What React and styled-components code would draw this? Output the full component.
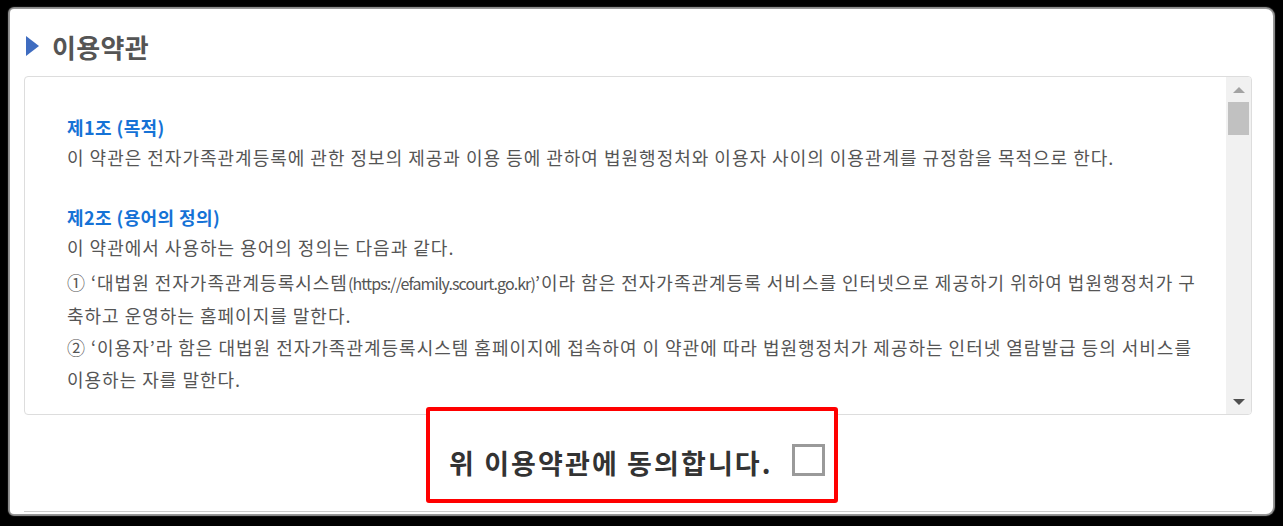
import React from 'react';
import styled, { createGlobalStyle } from 'styled-components';

const GlobalStyle = createGlobalStyle`
	html, body {
		margin: 0;
		padding: 0;
		background: #000;
	}
	body {
		font-family: 'Noto Sans CJK KR', 'Noto Sans', sans-serif;
	}
`;

const StyledPage = styled.div`
	width: 1283px;
	height: 526px;
	padding: 9px 10px 0;
	box-sizing: border-box;
`;

const StyledCard = styled.section`
	height: 505px;
	background: #fff;
	border-radius: 4px 7px 7px 4px;
	box-shadow: 0 0 1px 2px rgba(190, 190, 190, 0.8);
	padding: 23px 21px 0 14px;
	box-sizing: border-box;
	display: flex;
	flex-direction: column;
`;

const StyledTitle = styled.h2`
	display: flex;
	align-items: center;
	gap: 13px;
	margin: 0 0 16px 2px;
	height: 28px;
	font-size: 26px;
	font-weight: 700;
	color: #555;
	letter-spacing: 0.3px;

	&::before {
		content: '';
		width: 0;
		height: 0;
		border-top: 10px solid transparent;
		border-bottom: 10px solid transparent;
		border-left: 13px solid #3f6cc0;
	}
`;

const StyledTermsBox = styled.div`
	display: flex;
	height: 337px;
	border: 1px solid #ddd;
	border-radius: 4px;
	overflow: hidden;
`;

const StyledTermsContent = styled.div`
	flex: 1;
	overflow: hidden;
	padding: 35px 24px 0 42px;
	font-size: 18px;
	line-height: 30px;
	letter-spacing: 1px;
	color: #555;
	word-break: break-all;
`;

const StyledArticle = styled.div`
	margin-bottom: 30px;
`;

const StyledArticleTitle = styled.h3`
	margin: 0;
	font-size: 18px;
	font-weight: 700;
	color: #1572d6;
	letter-spacing: 0.4px;
`;

const StyledText = styled.p`
	margin: 0;
	line-height: ${({ item }) => (item ? '32px' : '30px')};
	margin-top: ${({ first }) => (first ? '4px' : '0')};
`;

const StyledUrl = styled.span`
	font-size: 16px;
	letter-spacing: -0.9px;
`;

const StyledScrollbar = styled.div`
	width: 25px;
	background: #f1f1f1;
	display: flex;
	flex-direction: column;
	align-items: center;
`;

const StyledArrow = styled.div`
	width: 0;
	height: 0;
	border-left: 6px solid transparent;
	border-right: 6px solid transparent;
	${({ down }) =>
		down
			? 'border-top: 6px solid #505050; margin-top: auto; margin-bottom: 9px;'
			: 'border-bottom: 6px solid #a3a3a3; margin-top: 10px;'}
`;

const StyledThumb = styled.div`
	width: 21px;
	height: 33px;
	margin-top: 9px;
	background: #c1c1c1;
`;

const StyledAgreeArea = styled.div`
	display: flex;
	justify-content: center;
	height: 96px;
	border-bottom: 1px solid #ccc;
	padding-right: 12px;
`;

const StyledHighlight = styled.label`
	position: relative;
	z-index: 1;
	margin-top: -8px;
	width: 412px;
	height: 96px;
	box-sizing: border-box;
	border: 4px solid #ff0000;
	border-radius: 3px;
	background: #fff;
	display: flex;
	align-items: center;
	padding: 14px 10px 0 19px;
	gap: 19px;
	font-size: 27px;
	font-weight: 700;
	color: #333;
	letter-spacing: 2.1px;
	white-space: nowrap;
`;

const StyledCheckbox = styled.span`
	flex: none;
	width: 33px;
	height: 32px;
	box-sizing: border-box;
	border: 3px solid #9a9a9a;
	background: #fff;
	margin-top: -4px;
`;

const App = () => (
	<>
		<GlobalStyle />
		<StyledPage>
			<StyledCard>
				<StyledTitle>이용약관</StyledTitle>
				<StyledTermsBox>
					<StyledTermsContent>
						<StyledArticle>
							<StyledArticleTitle>제1조 (목적)</StyledArticleTitle>
							<StyledText>
								이 약관은 전자가족관계등록에 관한 정보의 제공과 이용 등에 관하여 법원행정처와 이용자 사이의 이용관계를
								규정함을 목적으로 한다.
							</StyledText>
						</StyledArticle>
						<StyledArticle>
							<StyledArticleTitle>제2조 (용어의 정의)</StyledArticleTitle>
							<StyledText>이 약관에서 사용하는 용어의 정의는 다음과 같다.</StyledText>
							<StyledText item first>
								① ‘대법원 전자가족관계등록시스템
								<StyledUrl>(https://efamily.scourt.go.kr)</StyledUrl>’이라 함은 전자가족관계등록 서비스를 인터넷으로
								제공하기 위하여 법원행정처가 구축하고 운영하는 홈페이지를 말한다.
							</StyledText>
							<StyledText item>
								② ‘이용자’라 함은 대법원 전자가족관계등록시스템 홈페이지에 접속하여 이 약관에 따라 법원행정처가 제공하는
								인터넷 열람발급 등의 서비스를 이용하는 자를 말한다.
							</StyledText>
						</StyledArticle>
					</StyledTermsContent>
					<StyledScrollbar>
						<StyledArrow />
						<StyledThumb />
						<StyledArrow down />
					</StyledScrollbar>
				</StyledTermsBox>
				<StyledAgreeArea>
					<StyledHighlight>
						위 이용약관에 동의합니다.
						<StyledCheckbox />
					</StyledHighlight>
				</StyledAgreeArea>
			</StyledCard>
		</StyledPage>
	</>
);

export default App;
